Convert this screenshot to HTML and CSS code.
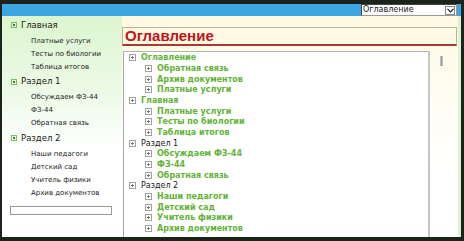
FILE: index.html
```html
<!DOCTYPE html>
<html lang="ru">
<head>
    <meta charset="UTF-8">
    <title>Оглавление</title>
    <link rel="stylesheet" href="styles.css">
</head>
<body>
<div class="page">
    <div class="topbar">
        <div class="jump">
            <span class="jump-text">Оглавление</span>
            <span class="jump-arrow"><svg width="7" height="5" viewBox="0 0 7 5"><path d="M0.5 0.8 L3.5 3.8 L6.5 0.8" fill="none" stroke="#222" stroke-width="1.2"/></svg></span>
        </div>
    </div>
    <div class="layout">
        <div class="side">
            <div class="group">
                <div class="group-head"><span class="dot"></span>Главная</div>
                <div class="sub">Платные услуги</div>
                <div class="sub">Тесты по биологии</div>
                <div class="sub">Таблица итогов</div>
            </div>
            <div class="group">
                <div class="group-head"><span class="dot"></span>Раздел 1</div>
                <div class="sub">Обсуждаем ФЗ-44</div>
                <div class="sub">ФЗ-44</div>
                <div class="sub">Обратная связь</div>
            </div>
            <div class="group">
                <div class="group-head"><span class="dot"></span>Раздел 2</div>
                <div class="sub">Наши педагоги</div>
                <div class="sub">Детский сад</div>
                <div class="sub">Учитель физики</div>
                <div class="sub">Архив документов</div>
            </div>
            <div class="search"></div>
        </div>
        <div class="main">
            <h1 class="title">Оглавление</h1>
            <div class="content">
                <div class="tree">
                    <div class="node root"><i class="pm"></i>Оглавление</div>
                    <div class="node leaf"><i class="pm"></i>Обратная связь</div>
                    <div class="node leaf"><i class="pm"></i>Архив документов</div>
                    <div class="node leaf"><i class="pm"></i>Платные услуги</div>
                    <div class="node root"><i class="pm"></i>Главная</div>
                    <div class="node leaf"><i class="pm"></i>Платные услуги</div>
                    <div class="node leaf"><i class="pm"></i>Тесты по биологии</div>
                    <div class="node leaf"><i class="pm"></i>Таблица итогов</div>
                    <div class="node root plain"><i class="pm"></i>Раздел 1</div>
                    <div class="node leaf"><i class="pm"></i>Обсуждаем ФЗ-44</div>
                    <div class="node leaf"><i class="pm"></i>ФЗ-44</div>
                    <div class="node leaf"><i class="pm"></i>Обратная связь</div>
                    <div class="node root plain"><i class="pm"></i>Раздел 2</div>
                    <div class="node leaf"><i class="pm"></i>Наши педагоги</div>
                    <div class="node leaf"><i class="pm"></i>Детский сад</div>
                    <div class="node leaf"><i class="pm"></i>Учитель физики</div>
                    <div class="node leaf"><i class="pm"></i>Архив документов</div>
                </div>
                <div class="scroll"><span class="thumb"></span></div>
            </div>
        </div>
    </div>
</div>
</body>
</html>
```

FILE: styles.css
```css
html, body { margin: 0; padding: 0; background: #1b231b; }
.page {
    box-sizing: border-box; width: 464px; height: 241px; overflow: hidden;
    border-style: solid; border-color: #1b231b; border-width: 4px 3px 4px 2px;
    display: flex; flex-direction: column;
    font-family: "DejaVu Sans", Verdana, sans-serif;
}

/* top bar with the jump select */
.topbar { height: 12px; background: #3ba6e2; display: flex; justify-content: flex-end; padding-right: 4px; }
.jump {
    box-sizing: border-box; width: 96px; height: 12px; background: #fff;
    border: 1px solid #444; border-right-color: #999; border-bottom-color: #999;
    display: flex; align-items: center; justify-content: space-between;
}
.jump-text { font-size: 8px; color: #222; padding-left: 1px; line-height: 10px; }
.jump-arrow {
    box-sizing: border-box; width: 10px; height: 9px; margin-right: 1px;
    border: 1px solid #888; display: flex; align-items: center; justify-content: center;
}

.layout { flex: 1; display: flex; min-height: 0; }

/* left menu */
.side {
    width: 120px; padding-top: 1px;
    background: linear-gradient(to bottom, #dcf5cf 0, #edfae8 35%, #ffffff 62%);
    color: #222;
}
.group { margin-top: 1.5px; }
.group-head { display: flex; align-items: center; font-size: 8.5px; line-height: 13px; margin-bottom: 3px; padding-left: 9px; }
.dot {
    box-sizing: border-box; width: 6px; height: 6px; margin-right: 4px;
    border: 1px solid #7cbf64; background: #e9f8e2;
    display: flex; align-items: center; justify-content: center;
}
.dot::after { content: ""; width: 2px; height: 2px; background: #3d7f2c; }
.sub { font-size: 7px; line-height: 13px; padding-left: 29px; white-space: nowrap; }
.search {
    box-sizing: border-box; width: 102px; height: 9px; margin: 6px 0 0 8px;
    background: #fff; border: 1px solid #9a9a9a;
}

/* main part */
.main {
    flex: 1; display: flex; flex-direction: column; padding-top: 11px;
    border-right: 3px solid #dcf2d2;
    background: linear-gradient(to bottom, #fff9e2 0, #fffdf4 40%, #ffffff 70%);
}
.title {
    margin: 0 1px 0 0; height: 16px; line-height: 16px; padding-left: 2px;
    border: 1px solid #b9b0a0; border-bottom: 2px solid #a83a34;
    background: #fffbe2; color: #c4121c;
    font-family: "Liberation Sans", Arial, sans-serif; font-size: 15px; font-weight: bold;
}
.content { flex: 1; display: flex; margin-top: 5px; min-height: 0; }
.tree {
    width: 304px; margin-left: 1px; padding-top: 0.5px; background: #fff;
    border-top: 1px solid #b4b4b4; border-left: 1px solid #a6a6a6; border-right: 2px solid #c6c6c6;
}
.node {
    display: flex; align-items: center; height: 10.68px; font-size: 8px;
    white-space: nowrap; font-weight: bold; color: #62b336;
}
.node.root { padding-left: 5px; }
.node.leaf { padding-left: 21px; }
.node.plain { font-weight: normal; color: #1a1a1a; }
.pm {
    box-sizing: border-box; width: 7px; height: 7px; margin-right: 5px; flex: none;
    border: 1px solid #a0a0a0;
    background:
        linear-gradient(#7a7a7a, #7a7a7a) center / 3px 1px no-repeat,
        linear-gradient(#7a7a7a, #7a7a7a) center / 1px 3px no-repeat,
        #fff;
}
.scroll { flex: 1; }
.thumb {
    display: block; width: 3px; height: 10px; margin: 5px 0 0 10px;
    background: linear-gradient(to right, #d4d4d4, #9a9a9a 50%, #d4d4d4);
}
```
